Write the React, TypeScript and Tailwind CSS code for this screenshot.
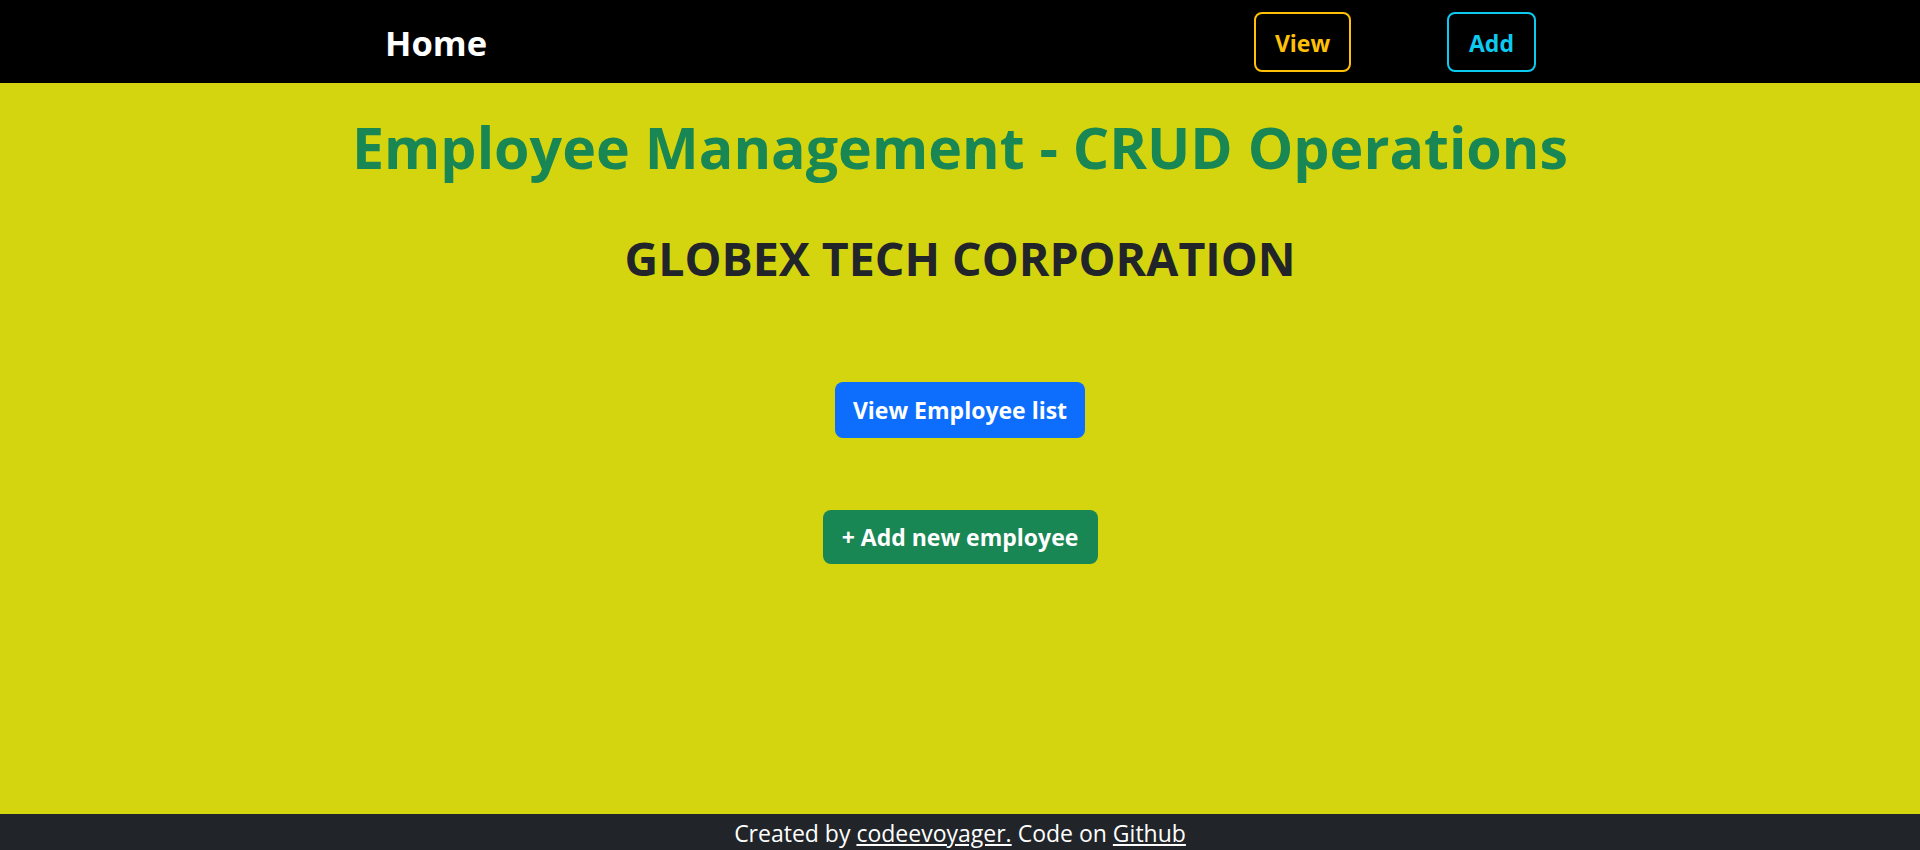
import React from "react";

const font = { fontFamily: '"Open Sans", "Noto Sans", sans-serif' };

export default function App() {
  return (
    <div className="flex h-screen flex-col bg-[#d5d50f]" style={font}>
      <nav className="flex h-[83px] shrink-0 items-center justify-between bg-black pl-[385px] pr-[384px]">
        <a className="pt-[4px] text-[34.5px] font-bold leading-none text-white">Home</a>
        <div className="flex items-center gap-[96px] pt-[1px]">
          <button className="flex h-[60px] w-[97px] items-center justify-center rounded-lg border-2 border-[#ffc107] pt-[2px] text-[23px] font-bold text-[#ffc107]">
            View
          </button>
          <button className="flex h-[60px] w-[89px] items-center justify-center rounded-lg border-2 border-[#0dcaf0] pt-[2px] text-[23px] font-bold text-[#0dcaf0]">
            Add
          </button>
        </div>
      </nav>
      <main className="flex flex-1 flex-col items-center">
        <h1 className="mt-[29px] text-[57.3px] font-bold leading-[70px] text-[#198754]">
          Employee Management - CRUD Operations
        </h1>
        <h2 className="mt-[49px] text-[46.5px] font-bold leading-[54px] text-[#212529]">
          GLOBEX TECH CORPORATION
        </h2>
        <button className="mt-[97px] flex h-[56px] w-[250px] items-center justify-center rounded-lg bg-[#0d6efd] pt-[1px] text-[23px] font-bold text-white">
          View Employee list
        </button>
        <button className="mt-[72px] flex h-[54px] w-[275px] items-center justify-center rounded-lg bg-[#198754] pt-[1px] text-[23px] font-bold text-white">
          + Add new employee
        </button>
      </main>
      <footer className="flex h-[36px] shrink-0 items-center justify-center bg-[#212529] pt-[3px] text-[23px] leading-none text-white">
        <span>
          Created by <a className="underline">codeevoyager.</a> Code on{" "}
          <a className="underline">Github</a>
        </span>
      </footer>
    </div>
  );
}
